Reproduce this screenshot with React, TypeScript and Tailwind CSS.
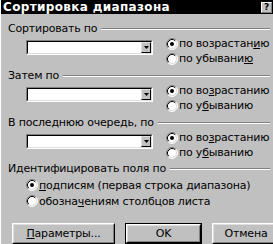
import type { ReactNode } from 'react'

// Win95-style "Сортировка диапазона" dialog (Excel sort range).

function Radio({ checked }: { checked?: boolean }) {
  return (
    <svg width="12" height="12" viewBox="0 0 12 12" className="shrink-0">
      <circle cx="6" cy="6" r="5" fill="#fff" />
      <path d="M2.11 9.89A5.5 5.5 0 0 1 9.89 2.11" stroke="#808080" fill="none" />
      <path d="M9.89 2.11A5.5 5.5 0 0 1 2.11 9.89" stroke="#fff" fill="none" />
      <path d="M2.82 9.18A4.5 4.5 0 0 1 9.18 2.82" stroke="#000" fill="none" />
      <path d="M9.18 2.82A4.5 4.5 0 0 1 2.82 9.18" stroke="#dfdfdf" fill="none" />
      {checked && <circle cx="6" cy="6" r="2" fill="#000" />}
    </svg>
  )
}

function Option({ checked, children, h = 'h-[15px]' }: { checked?: boolean; children: ReactNode; h?: string }) {
  return (
    <div className={`flex items-center gap-[1px] ${h}`}>
      <Radio checked={checked} />
      <span className="whitespace-nowrap">{children}</span>
    </div>
  )
}

function Combo() {
  return (
    <div className="mt-[4px] flex h-[15px] w-[127px] shrink-0 border border-t-[#808080] border-l-[#808080] border-r-white border-b-white">
      <div className="flex flex-1 border border-t-black border-l-black border-r-[#dfdfdf] border-b-[#dfdfdf] bg-white">
        <div className="flex-1" />
        <div className="flex w-[10px] items-center justify-center border border-t-[#dfdfdf] border-l-[#dfdfdf] border-r-black border-b-black bg-[#c0c0c0]">
          <svg width="5" height="3" viewBox="0 0 5 3">
            <path d="M0 0h5L2.5 3z" fill="#000" />
          </svg>
        </div>
      </div>
    </div>
  )
}

function Header({ label, className = '' }: { label: string; className?: string }) {
  return (
    <div className={`flex h-[12px] items-center pr-[3px] ${className}`}>
      <span className="whitespace-nowrap">{label}</span>
      <div className="ml-[4px] mt-[2px] h-[2px] flex-1 border-t border-b border-t-[#808080] border-b-white" />
    </div>
  )
}

function SortGroup({ label, asc, desc, className = '' }: { label: string; asc: ReactNode; desc: ReactNode; className?: string }) {
  return (
    <>
      <Header label={label} className={className} />
      <div className="mt-[2px] flex">
        <div className="ml-[18px] shrink-0">
          <Combo />
        </div>
        <div className="ml-[13px] flex shrink-0 flex-col">
          <Option checked>{asc}</Option>
          <Option>{desc}</Option>
        </div>
      </div>
    </>
  )
}

function Button({ children, w, isDefault }: { children: ReactNode; w: string; isDefault?: boolean }) {
  return (
    <div className={`h-[21px] shrink-0 ${w} ${isDefault ? 'border border-black' : ''}`}>
      <div className="flex h-full border border-t-white border-l-white border-r-black border-b-black">
        <div className="flex flex-1 items-center justify-center border border-t-[#dfdfdf] border-l-[#dfdfdf] border-r-[#808080] border-b-[#808080] bg-[#c0c0c0]">
          {children}
        </div>
      </div>
    </div>
  )
}

export default function App() {
  return (
    <div className="flex h-[244px] w-[273px] flex-col overflow-hidden border-l border-l-white bg-[#c0c0c0] font-['DejaVu_Sans',Verdana,sans-serif] text-[11px] leading-none text-black">
      <div className="flex h-[14px] shrink-0 items-center justify-between bg-black pl-[2px] pr-[1px]">
        <span className="text-[12px] font-bold tracking-[0.35px] text-white">Сортировка диапазона</span>
        <div className="flex h-[11px] w-[11px] items-center justify-center border border-t-white border-l-white border-r-[#808080] border-b-[#808080] bg-[#c0c0c0] text-[9px] font-bold">
          ?
        </div>
      </div>

      <div className="flex flex-col pl-[7px] tracking-[-0.2px]">
        <SortGroup
          className="mt-[8px]"
          label="Сортировать по"
          asc={<>по возрастан<u>и</u>ю</>}
          desc={<>по убывани<u>ю</u></>}
        />
        <SortGroup
          className="mt-[3px]"
          label="Затем по"
          asc={<>по во<u>з</u>растанию</>}
          desc={<>по у<u>б</u>ыванию</>}
        />
        <SortGroup
          className="mt-[3px]"
          label="В последнюю очередь, по"
          asc={<>по во<u>з</u>растанию</>}
          desc={<>по у<u>б</u>ыванию</>}
        />

        <Header label="Идентифицировать поля по" className="mt-[2px]" />
        <div className="ml-[18px] mt-[3px] flex flex-col">
          <Option checked h="h-[16px]">
            <u>п</u>одписям (первая строка диапазона)
          </Option>
          <Option h="h-[16px]">
            обозна<u>ч</u>ениям столбцов листа
          </Option>
        </div>

        <div className="ml-[4px] mt-[14px] flex gap-[10px]">
          <Button w="w-[103px]">
            <span>
              <u>П</u>араметры...
            </span>
          </Button>
          <Button w="w-[77px]" isDefault>
            OK
          </Button>
          <Button w="w-[68px]">Отмена</Button>
        </div>
      </div>
    </div>
  )
}
